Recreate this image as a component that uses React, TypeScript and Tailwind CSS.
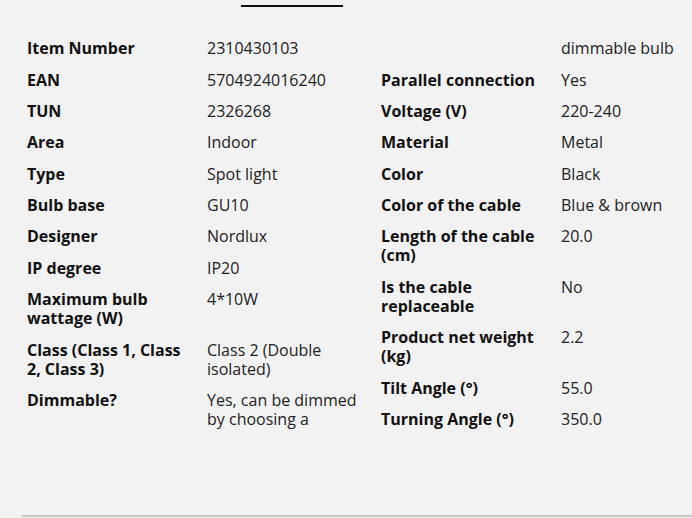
const left: [string, string][] = [
  ["Item Number", "2310430103"],
  ["EAN", "5704924016240"],
  ["TUN", "2326268"],
  ["Area", "Indoor"],
  ["Type", "Spot light"],
  ["Bulb base", "GU10"],
  ["Designer", "Nordlux"],
  ["IP degree", "IP20"],
  ["Maximum bulb wattage (W)", "4*10W"],
  ["Class (Class 1, Class 2, Class 3)", "Class 2 (Double isolated)"],
  ["Dimmable?", "Yes, can be dimmed by choosing a"],
];

const right: [string, string][] = [
  ["", "dimmable bulb"],
  ["Parallel connection", "Yes"],
  ["Voltage (V)", "220-240"],
  ["Material", "Metal"],
  ["Color", "Black"],
  ["Color of the cable", "Blue & brown"],
  ["Length of the cable (cm)", "20.0"],
  ["Is the cable replaceable", "No"],
  ["Product net weight (kg)", "2.2"],
  ["Tilt Angle (°)", "55.0"],
  ["Turning Angle (°)", "350.0"],
];

function SpecColumn({ rows }: { rows: [string, string][] }) {
  return (
    <dl className="flex w-[354px] flex-col">
      {rows.map(([label, value], i) => (
        <div key={i} className="flex py-[6.2px] leading-[19px]">
          <dt className="w-[180px] shrink-0 pr-[10px] font-bold text-[#111]">{label}</dt>
          <dd className="w-[170px] pr-[8px] text-[#222]">{value}</dd>
        </div>
      ))}
    </dl>
  );
}

export default function App() {
  return (
    <div
      className="relative h-[518px] w-[692px] overflow-hidden bg-[#f2f2f2] text-[16px]"
      style={{ fontFamily: '"Open Sans", "Noto Sans", sans-serif' }}
    >
      <div className="absolute left-[241px] top-[5px] h-[2px] w-[102px] bg-[#111]" />
      <div className="flex gap-[4px] pl-[27px] pt-[33px]">
        <SpecColumn rows={left} />
        <SpecColumn rows={right} />
      </div>
      <div className="absolute bottom-[1px] left-[22px] right-0 h-[2px] bg-[#c8c8c8]" />
    </div>
  );
}
